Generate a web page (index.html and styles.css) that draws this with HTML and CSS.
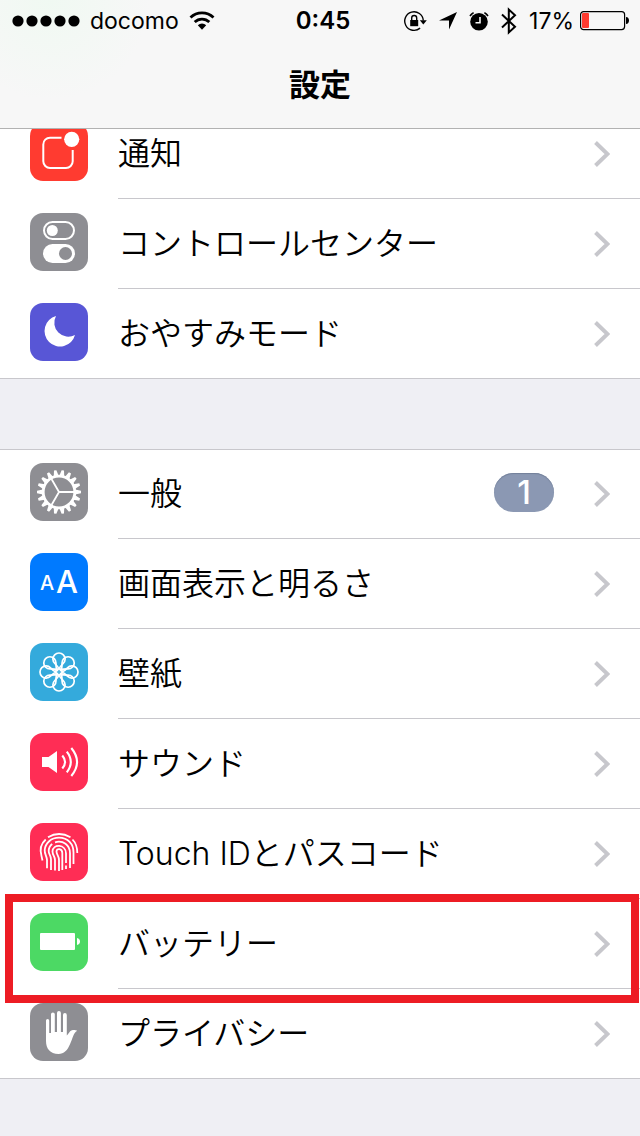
FILE: index.html
```html
<!DOCTYPE html>
<html lang="ja">
<head>
  <meta charset="UTF-8" />
  <meta name="viewport" content="width=device-width, initial-scale=1.0"/>
  <title>設定</title>
  <link rel="stylesheet" href="styles.css">
</head>
<body>

  <header class="top">
    <div class="status">
      <div class="status-left">
        <svg width="68" height="12" viewBox="0 0 68 12" aria-hidden="true">
          <circle cx="6" cy="6" r="5.6"/><circle cx="20" cy="6" r="5.6"/><circle cx="34" cy="6" r="5.6"/><circle cx="48" cy="6" r="5.6"/><circle cx="62" cy="6" r="5.6"/>
        </svg>
        <span>docomo</span>
        <svg width="26" height="20" viewBox="0 0 26 20" aria-hidden="true">
          <path d="M1.5 6.5a16.5 16.5 0 0 1 23 0M5.7 11a10.5 10.5 0 0 1 14.6 0" fill="none" stroke="#000" stroke-width="2.8"/>
          <path d="M8.8 14.2a6 6 0 0 1 8.4 0L13 18.8z"/>
        </svg>
      </div>
      <div class="clock">0:45</div>
      <div class="status-right">
        <svg width="24" height="22" viewBox="0 0 24 22" aria-hidden="true">
          <path d="M20.3 10.5a9.3 9.3 0 1 0-3.2 7.6" fill="none" stroke="#000" stroke-width="1.4"/>
          <path d="M16.8 10.2h7l-3.5 4.3z"/>
          <path d="M7.2 10h8v6.2h-8z"/>
          <path d="M8.7 10.5V8a2.5 2.5 0 0 1 5 0v2.5" fill="none" stroke="#000" stroke-width="1.4"/>
        </svg>
        <svg width="18" height="18" viewBox="0 0 18 18" aria-hidden="true">
          <path d="M18 0L10 17.5V8.6H0z"/>
        </svg>
        <svg width="20" height="20" viewBox="0 0 20 20" aria-hidden="true">
          <circle cx="10" cy="10.8" r="8.8"/>
          <path d="M11 6v5.8H6.5" fill="none" stroke="#f7f7f7" stroke-width="1.6"/>
          <path d="M1 5A11 11 0 0 1 4.6 1.6M19 5a11 11 0 0 0-3.6-3.4" fill="none" stroke="#000" stroke-width="1.6"/>
        </svg>
        <svg width="16" height="28" viewBox="0 0 16 28" aria-hidden="true">
          <path d="M1 7.5l13 12.3-6.2 5.6V2.6L14 8.2 1 20.5" fill="none" stroke="#000" stroke-width="2"/>
        </svg>
        <span>17%</span>
        <svg class="battery" width="50" height="20" viewBox="0 0 50 20" aria-hidden="true">
          <rect x=".6" y=".6" width="44" height="18" rx="3" fill="none" stroke="#000" stroke-width="1.2"/>
          <rect x="2" y="2" width="7" height="15" rx="1" fill="#ff3b30"/>
          <path d="M46 6c4 0 4 7 0 7z"/>
        </svg>
      </div>
    </div>
    <h1>設定</h1>
  </header>

  <main>
    <ul class="group">
      <li>
        <a href="#" class="row">
          <svg class="icon red" viewBox="0 0 58 58" aria-hidden="true">
            <path d="M31.5 14.7H20a6.7 6.7 0 0 0-6.7 6.7V38.3A6.7 6.7 0 0 0 20 45H36a6.7 6.7 0 0 0 6.7-6.7V27" fill="none" stroke="#fff" stroke-width="2"/>
            <circle cx="41.7" cy="16.3" r="7.6" fill="#fff"/>
          </svg>
          <span class="body"><span class="label">通知</span><svg class="chevron" viewBox="0 0 16 26"><path d="M1.5 1.5L13.5 13l-12 11.5"/></svg></span>
        </a>
      </li>
      <li>
        <a href="#" class="row">
          <svg class="icon gray" viewBox="0 0 58 58" aria-hidden="true">
            <rect x="14" y="9" width="30" height="17" rx="8.5" fill="none" stroke="#fff" stroke-width="2"/>
            <circle cx="22.3" cy="17.5" r="5.5" fill="#fff"/>
            <rect x="13" y="31" width="32" height="19" rx="9.5" fill="#fff"/>
            <circle cx="35.5" cy="40.5" r="6.5" fill="#8e8e93"/>
          </svg>
          <span class="body"><span class="label">コントロールセンター</span><svg class="chevron" viewBox="0 0 16 26"><path d="M1.5 1.5L13.5 13l-12 11.5"/></svg></span>
        </a>
      </li>
      <li>
        <a href="#" class="row">
          <svg class="icon purple" viewBox="0 0 58 58" aria-hidden="true">
            <path d="M26 13A15.5 15.5 0 1 0 45 32A14 14 0 0 1 26 13z" fill="#fff"/>
          </svg>
          <span class="body"><span class="label">おやすみモード</span><svg class="chevron" viewBox="0 0 16 26"><path d="M1.5 1.5L13.5 13l-12 11.5"/></svg></span>
        </a>
      </li>
    </ul>

    <ul class="group">
      <li>
        <a href="#" class="row">
          <svg class="icon gray" viewBox="0 0 58 58" aria-hidden="true">
            <g fill="#fff">
              <path id="teeth" d="M45 26.5l6 1.3v2.4l-6 1.3zM13 31.5l-6-1.3v-2.4l6-1.3z"/>
              <use href="#teeth" transform="rotate(20 29 29)"/>
              <use href="#teeth" transform="rotate(40 29 29)"/>
              <use href="#teeth" transform="rotate(60 29 29)"/>
              <use href="#teeth" transform="rotate(80 29 29)"/>
              <use href="#teeth" transform="rotate(100 29 29)"/>
              <use href="#teeth" transform="rotate(120 29 29)"/>
              <use href="#teeth" transform="rotate(140 29 29)"/>
              <use href="#teeth" transform="rotate(160 29 29)"/>
            </g>
            <g fill="none" stroke="#fff">
              <circle cx="29" cy="29" r="15.8" stroke-width="2.8"/>
              <path d="M29 29h15M29 29l-7.5-13M29 29l-7.5 13" stroke-width="1.8"/>
            </g>
          </svg>
          <span class="body"><span class="label">一般</span><span class="badge">1</span><svg class="chevron" viewBox="0 0 16 26"><path d="M1.5 1.5L13.5 13l-12 11.5"/></svg></span>
        </a>
      </li>
      <li>
        <a href="#" class="row">
          <svg class="icon blue" viewBox="0 0 58 58" aria-hidden="true">
            <text x="10" y="37" font-size="20">A</text>
            <text x="26" y="40" font-size="31">A</text>
          </svg>
          <span class="body"><span class="label">画面表示と明るさ</span><svg class="chevron" viewBox="0 0 16 26"><path d="M1.5 1.5L13.5 13l-12 11.5"/></svg></span>
        </a>
      </li>
      <li>
        <a href="#" class="row">
          <svg class="icon sky" viewBox="0 0 58 58" aria-hidden="true">
            <g fill="none" stroke="#fff" stroke-width="1.7">
              <path id="petal" d="M29 26q-1-2.500-4.200-5.500a6.100 6.100 0 1 1 8.400 0Q30 23.500 29 26z"/>
              <use href="#petal" transform="rotate(45 29 29)"/>
              <use href="#petal" transform="rotate(90 29 29)"/>
              <use href="#petal" transform="rotate(135 29 29)"/>
              <use href="#petal" transform="rotate(180 29 29)"/>
              <use href="#petal" transform="rotate(225 29 29)"/>
              <use href="#petal" transform="rotate(270 29 29)"/>
              <use href="#petal" transform="rotate(315 29 29)"/>
              <circle cx="29" cy="29" r="3.2"/>
            </g>
          </svg>
          <span class="body"><span class="label">壁紙</span><svg class="chevron" viewBox="0 0 16 26"><path d="M1.5 1.5L13.5 13l-12 11.5"/></svg></span>
        </a>
      </li>
      <li>
        <a href="#" class="row">
          <svg class="icon pink" viewBox="0 0 58 58" aria-hidden="true">
            <path d="M12 24h6.5l8.500-6v22l-8.500-6H12z" fill="#fff"/>
            <path d="M32.3 22.500q5.500 6.500 0 13M36.800 18.700q8 10.300 0 20.600M41.300 15q11.500 14 0 28" fill="none" stroke="#fff" stroke-width="2.1"/>
          </svg>
          <span class="body"><span class="label">サウンド</span><svg class="chevron" viewBox="0 0 16 26"><path d="M1.5 1.5L13.5 13l-12 11.5"/></svg></span>
        </a>
      </li>
      <li>
        <a href="#" class="row">
          <svg class="icon pink" viewBox="0 0 58 58" aria-hidden="true">
            <g fill="none" stroke="#fff" stroke-width="1.8">
              <path d="M18 14.2q11-6.400 22.500 0"/>
              <path d="M15.700 16.500Q8.500 23 11.500 33l1 4.500"/>
              <path d="M42.500 16.500q4.800 5 4.800 13.500"/>
              <path d="M17 45.300V37c-.300-4-2.500-6-2.300-10 .600-7 6.500-12.300 14.300-12.300 9 0 14.500 6.500 14.500 14.500V41"/>
              <path d="M21 47V36.500c0-4-2.300-5-2.300-8.500 0-3 1.500-5.500 3.500-7"/>
              <path d="M25 19.300c8-2.300 15 2.700 15 11V45"/>
              <path d="M25 47.500V37c0-3.500-2.500-5-2.500-8.500 0-8 13.500-7.500 13.500 2V40"/>
              <path d="M36 42.500V46"/>
              <path d="M29 48V37c0-4-2.500-5.500-2.500-8.500 0-3.500 5.800-3.500 5.800 1.500V47"/>
            </g>
          </svg>
          <span class="body"><span class="label">Touch IDとパスコード</span><svg class="chevron" viewBox="0 0 16 26"><path d="M1.5 1.5L13.5 13l-12 11.5"/></svg></span>
        </a>
      </li>
      <li class="marked">
        <a href="#" class="row">
          <svg class="icon green" viewBox="0 0 58 58" aria-hidden="true">
            <rect x="10" y="20" width="35" height="17" rx="1" fill="#fff"/>
            <path d="M47 25c4 .7 4 6.3 0 7z" fill="#fff"/>
          </svg>
          <span class="body"><span class="label">バッテリー</span><svg class="chevron" viewBox="0 0 16 26"><path d="M1.5 1.5L13.5 13l-12 11.5"/></svg></span>
        </a>
      </li>
      <li>
        <a href="#" class="row">
          <svg class="icon gray" viewBox="0 0 58 58" aria-hidden="true">
            <path d="M16 38V17.500a1.600 1.600 0 0 1 3.200 0V30H21V11.300a1.900 1.900 0 0 1 3.800 0V29H27V10a1.900 1.900 0 0 1 3.900 0V29H33V12a1.900 1.900 0 0 1 3.800 0V32.500c2-1.500 3-5.500 6.200-5.500 2 0 3.500.200 4.200.800-4 2-4.500 8-7 13C37.500 47.500 34 51 28.500 51 20 51 16 45.500 16 38z" fill="#fff"/>
          </svg>
          <span class="body"><span class="label">プライバシー</span><svg class="chevron" viewBox="0 0 16 26"><path d="M1.5 1.5L13.5 13l-12 11.5"/></svg></span>
        </a>
      </li>
    </ul>
  </main>

</body>
</html>
```
FILE: styles.css
```css
* {
  box-sizing: border-box;
}

body {
  margin: 0;
  font-family: Inter, "Noto Sans CJK JP", sans-serif;
  background-color: #efeff4;
  color: #000;
}

svg {
  display: block;
  flex-shrink: 0;
}

.top {
  position: sticky;
  top: 0;
  z-index: 1;
  background: radial-gradient(circle at 50px 0, #f0f9f2, #f7f7f7 100px);
  border-bottom: 1px solid #b2b2b2;
}

.status {
  display: grid;
  grid-template-columns: 1fr auto 1fr;
  align-items: center;
  height: 41px;
  padding: 0 10px 0 12px;
  font-size: 23px;
}

.status-left,
.status-right {
  display: flex;
  align-items: center;
}

.status-left {
  gap: 10px;
}

.status-right {
  justify-content: flex-end;
  gap: 12px;
}

.clock {
  padding-left: 4px;
  font-size: 24px;
  font-weight: 600;
}

.battery {
  margin-left: -6px;
}

.top h1 {
  margin: 0;
  height: 87px;
  line-height: 87px;
  text-align: center;
  font-size: 31px;
  font-weight: 700;
}

/* the list is scrolled a little way under the header */
main {
  margin-top: -20px;
}

.group {
  list-style: none;
  margin: 0 0 70px;
  padding: 0;
  background-color: #fff;
  box-shadow: inset 0 1px #c8c7cc, inset 0 -1px #c8c7cc;
}

.row {
  display: flex;
  padding-left: 30px;
  color: inherit;
  text-decoration: none;
}

.icon {
  width: 58px;
  height: 58px;
  margin: 14px 30px 0 0;
  border-radius: 13px;
}

.icon text {
  fill: #fff;
  font-weight: 500;
}

.red { background-color: #ff3b30; }
.gray { background-color: #8e8e93; }
.purple { background-color: #5856d6; }
.blue { background-color: #007aff; }
.sky { background-color: #34aadc; }
.pink { background-color: #ff2d55; }
.green { background-color: #4cd964; }

.body {
  flex: 1;
  display: flex;
  align-items: center;
  height: 90px;
  padding-right: 30px;
  border-bottom: 1px solid #c8c7cc;
}

li:last-child .body {
  border-bottom-color: transparent;
}

.label {
  flex: 1;
  padding-bottom: 6px;
  font-size: 32px;
  font-weight: 350;
}

.badge {
  width: 60px;
  height: 39px;
  margin: 0 40px 2px 0;
  border-radius: 20px;
  background-color: #8b98b3;
  box-shadow: inset 0 1px 1px #73809a;
  color: #fff;
  font-size: 33px;
  font-weight: 500;
  line-height: 38px;
  text-align: center;
}

.chevron {
  width: 16px;
  height: 26px;
  fill: none;
  stroke: #c7c7cc;
  stroke-width: 4;
}

.marked {
  position: relative;
}

.marked::after {
  content: "";
  position: absolute;
  inset: -5px 1px -14px 5px;
  border: 8px solid #ed1c24;
  pointer-events: none;
}
```
